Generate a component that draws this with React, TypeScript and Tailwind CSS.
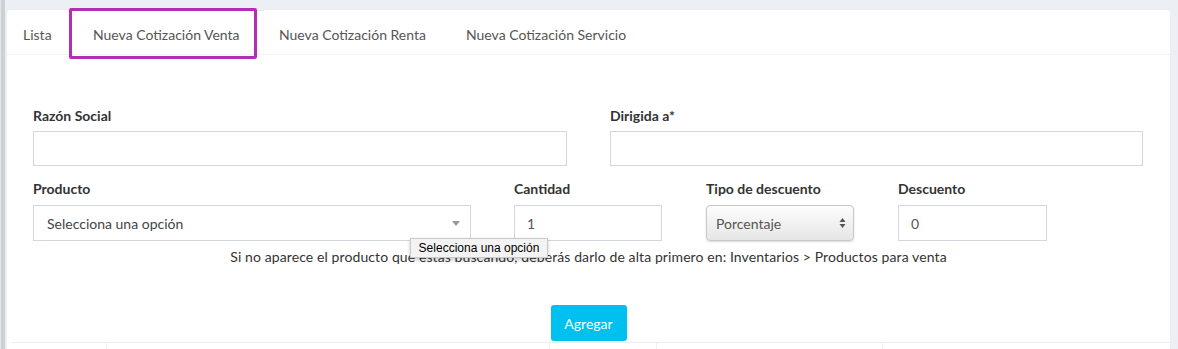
import React from "react";

const font = { fontFamily: "Lato, 'Noto Sans', sans-serif" };

const tabs = [
  { label: "Lista", w: "w-[70px]" },
  { label: "Nueva Cotización Venta", w: "w-[186px]" },
  { label: "Nueva Cotización Renta", w: "w-[187px]" },
  { label: "Nueva Cotización Servicio", w: "w-[200px]" },
];

const Label: React.FC<{ children: React.ReactNode }> = ({ children }) => (
  <div className="h-[20px] shrink-0 text-[14px] font-bold leading-[20px] text-[#333]">{children}</div>
);

export default function App() {
  return (
    <div className="relative h-[349px] w-[1178px] overflow-hidden bg-[#ecf0f5]" style={font}>
      {/* left edge strip */}
      <div className="absolute left-0 top-0 h-full w-[1px] bg-[#e2e5e9]" />
      <div className="absolute left-[1px] top-0 h-full w-[4px] bg-[#cdd1d6]" />

      <div className="flex h-full items-start pl-[7px] pr-[8px] pt-[10px]">
        <div className="relative flex w-[1163px] shrink-0 flex-col rounded-t-[3px] bg-white shadow-[0_0_1px_rgba(0,0,0,0.08)]">
          {/* Tabs */}
          <div className="flex h-[45px] shrink-0 items-stretch border-b border-[#f2f2f2] pl-[1px]">
            {tabs.map((t, i) => (
              <div
                key={t.label}
                className={`${t.w} flex items-center pl-[15px] pt-[4px] text-[14px] text-[#555] ${
                  i === 1 ? "border-t border-[#d8eaf5] bg-white" : ""
                }`}
              >
                {t.label}
              </div>
            ))}
          </div>

          {/* annotation box around active tab */}
          <div className="pointer-events-none absolute left-[62px] top-[-2px] h-[51px] w-[188px] rounded-[2px] border-[3px] border-[#b22fb4]" />

          {/* Body */}
          <div className="flex shrink-0 flex-col pl-[26px] pt-[51px]">
            <div className="flex gap-[43px]">
              <div className="flex w-[534px] flex-col gap-[5px]">
                <Label>Razón Social</Label>
                <div className="h-[35px] border border-[#d2d6de] bg-white" />
              </div>
              <div className="flex w-[533px] flex-col gap-[5px]">
                <Label>Dirigida a*</Label>
                <div className="h-[35px] border border-[#d2d6de] bg-white" />
              </div>
            </div>

            <div className="mt-[13px] flex">
              <div className="flex w-[438px] flex-col gap-[6px]">
                <Label>Producto</Label>
                <div className="flex h-[36px] items-center justify-between border border-[#d2d6de] bg-white pl-[13px] pr-[10px] text-[14px] text-[#444]">
                  <span>Selecciona una opción</span>
                  <svg width="8" height="5" viewBox="0 0 8 5">
                    <path d="M0 0 L8 0 L4 5 Z" fill="#999" />
                  </svg>
                </div>
              </div>
              <div className="ml-[43px] flex w-[148px] flex-col gap-[6px]">
                <Label>Cantidad</Label>
                <div className="flex h-[36px] items-center border border-[#d2d6de] bg-white pl-[12px] text-[14px] text-[#555]">
                  1
                </div>
              </div>
              <div className="ml-[44px] flex w-[148px] flex-col gap-[6px]">
                <Label>Tipo de descuento</Label>
                <div className="flex h-[36px] items-center justify-between rounded-[4px] border border-[#c8c8c8] bg-gradient-to-b from-[#fdfdfd] to-[#e6e6e6] pl-[9px] pr-[7px] text-[14px] text-[#555] shadow-[0_1px_2px_rgba(0,0,0,0.15)]">
                  <span>Porcentaje</span>
                  <svg width="7" height="12" viewBox="0 0 7 12">
                    <path d="M0.5 5 L3.5 1 L6.5 5 Z" fill="#555" />
                    <path d="M0.5 7 L3.5 11 L6.5 7 Z" fill="#555" />
                  </svg>
                </div>
              </div>
              <div className="ml-[44px] flex w-[149px] flex-col gap-[6px]">
                <Label>Descuento</Label>
                <div className="flex h-[36px] items-center border border-[#d2d6de] bg-white pl-[12px] text-[14px] text-[#555]">
                  0
                </div>
              </div>
            </div>

            <div className="relative mt-[6px] h-[20px] pr-[26px] text-center text-[14px] leading-[20px] tracking-[0.1px] text-[#333]">
              Si no aparece el producto que estas buscando, deberás darlo de alta primero en: Inventarios &gt; Productos para venta
            </div>

            <div className="mt-[38px] flex justify-center pr-[26px]">
              <div className="flex h-[36px] w-[76px] items-center justify-center rounded-[3px] bg-[#00c0ef] text-[14px] text-white">
                Agregar
              </div>
            </div>

            {/* top of table below */}
            <div className="ml-[-21px] mt-[1px] flex h-[10px] border-t border-[#eeeeee]">
              <div className="w-[95px] border-r border-[#f0f0f0]" />
              <div className="w-[443px] border-r border-[#f0f0f0]" />
              <div className="w-[107px] border-r border-[#f0f0f0]" />
              <div className="w-[226px] border-r border-[#f0f0f0]" />
            </div>
          </div>

          {/* tooltip */}
          <div
            className="absolute left-[403px] top-[228px] flex h-[20px] w-[138px] items-center justify-center border border-[#c9c9c9] bg-[#f3f3f3] text-[12px] text-black shadow-[0_2px_4px_rgba(0,0,0,0.2)]"
            style={{ fontFamily: "'Liberation Sans', Arial, sans-serif" }}
          >
            Selecciona una opción
          </div>
        </div>
      </div>
    </div>
  );
}
